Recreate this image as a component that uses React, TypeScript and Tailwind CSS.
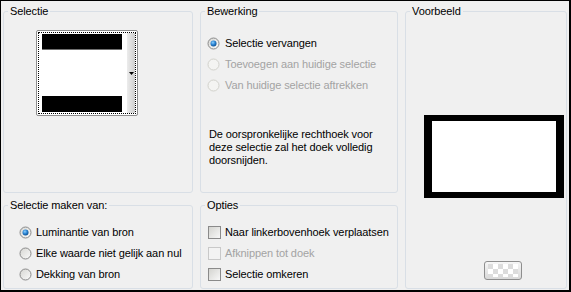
import { ReactNode } from "react"

type GroupBoxProps = {
    title: string
    className?: string
    children?: ReactNode
}

const GroupBox = ({ title, className = "", children }: GroupBoxProps) => (
    <fieldset className={`min-w-0 border border-[#d9dfe6] rounded-[3px] ${className}`}>
        <legend className="ml-[4px] px-[2px] leading-[13px]">{title}</legend>
        {children}
    </fieldset>
)

const Radio = ({ checked = false, disabled = false }: { checked?: boolean, disabled?: boolean }) => (
    <svg width="13" height="13" viewBox="0 0 13 13" className="shrink-0">
        <defs>
            <linearGradient id="radioFill" x1="0" y1="0" x2="1" y2="1">
                <stop offset="0" stopColor="#d6d6d2" />
                <stop offset="1" stopColor="#fbfbfb" />
            </linearGradient>
            <radialGradient id="radioDot" cx="0.4" cy="0.35" r="0.7">
                <stop offset="0" stopColor="#8fd0ff" />
                <stop offset="0.5" stopColor="#2d86d4" />
                <stop offset="1" stopColor="#0b4a8b" />
            </radialGradient>
        </defs>
        <circle cx="6.5" cy="6.5" r="5.5" fill={disabled ? "#f4f4f2" : "url(#radioFill)"} stroke={disabled ? "#d2d2cc" : "#8a8a8a"} />
        {checked && <circle cx="6.5" cy="6.5" r="3" fill="url(#radioDot)" />}
    </svg>
)

const Check = ({ disabled = false }: { disabled?: boolean }) => (
    <div className={`w-[13px] h-[13px] shrink-0 border ${disabled ? 'border-[#c9c9c9] bg-[#f3f3f3]' : 'border-[#8a8a8a] bg-gradient-to-br from-[#d4d4d0] to-[#f8f8f8]'}`} />
)

const Row = ({ children, disabled = false, gap = "gap-[5px]" }: { children: ReactNode, disabled?: boolean, gap?: string }) => (
    <div className={`h-[21px] flex items-center ${gap} ${disabled ? 'text-[#a3a3a3]' : ''}`}>{children}</div>
)

const App = () => {
    return (
        <div className="w-[571px] h-[292px] border-t border-l border-r-2 border-b-2 border-black bg-[#f0f0f0] pt-[4px] pl-[2px] font-['Liberation_Sans',Arial,sans-serif] text-[11px] leading-[13px] tracking-[-0.1px] text-black">
            <div className="grid grid-cols-[190px_198px_162px] grid-rows-[188px_90px] gap-x-[7px] gap-y-[6px]">

                <GroupBox title="Selectie">
                    <div className="ml-[32px] mt-[12px] w-[102px] h-[86px] border border-[#8c8c8c] rounded-[2px] bg-white p-[1px]">
                        <div className="h-full border border-dotted border-black flex">
                            <div className="flex-1 flex flex-col justify-between pl-[3px] pr-[5px] py-[1px]">
                                <div className="h-[16px] bg-black border-b border-[#6f6f6f]" />
                                <div className="h-[16px] bg-black" />
                            </div>
                            <div className="w-[8px] bg-gradient-to-r from-[#ececec] to-[#cfcfcf] flex items-center justify-center">
                                <svg width="5" height="3" viewBox="0 0 5 3"><path d="M0 0H5L2.5 3Z" fill="#000" /></svg>
                            </div>
                        </div>
                    </div>
                </GroupBox>

                <GroupBox title="Bewerking">
                    <div className="mt-[15px] pl-[6px]">
                        <Row><Radio checked />Selectie vervangen</Row>
                        <Row disabled><Radio disabled />Toevoegen aan huidige selectie</Row>
                        <Row disabled><Radio disabled />Van huidige selectie aftrekken</Row>
                    </div>
                    <p className="mt-[32px] pl-[8px]">
                        De oorspronkelijke rechthoek voor<br />
                        deze selectie zal het doek volledig<br />
                        doorsnijden.
                    </p>
                </GroupBox>

                <GroupBox title="Voorbeeld" className="row-span-2">
                    <div className="ml-[18px] mt-[97px] w-[140px] h-[83px] bg-white border-x-[8px] border-y-[6px] border-black" />
                    <div className="ml-[78px] mt-[63px] w-[38px] h-[19px] rounded-[3px] border border-[#8e8e8e] bg-gradient-to-b from-[#f6f6f6] to-[#d9d9d9] flex items-center justify-center">
                        <svg width="30" height="13" viewBox="0 0 30 13">
                            <rect x="0" y="0" width="30" height="13" fill="#dcdcdc" />
                            <rect x="5" y="0" width="5" height="5" fill="#fff" />
                            <rect x="15" y="0" width="5" height="5" fill="#fff" />
                            <rect x="25" y="0" width="5" height="5" fill="#fff" />
                            <rect x="0" y="5" width="5" height="5" fill="#fff" />
                            <rect x="10" y="5" width="5" height="5" fill="#fff" />
                            <rect x="20" y="5" width="5" height="5" fill="#fff" />
                            <rect x="5" y="10" width="5" height="3" fill="#fff" />
                            <rect x="15" y="10" width="5" height="3" fill="#fff" />
                            <rect x="25" y="10" width="5" height="3" fill="#fff" />
                        </svg>
                    </div>
                </GroupBox>

                <GroupBox title="Selectie maken van:">
                    <div className="mt-[10px] pl-[15px]">
                        <Row gap="gap-[4px]"><Radio checked />Luminantie van bron</Row>
                        <Row gap="gap-[4px]"><Radio />Elke waarde niet gelijk aan nul</Row>
                        <Row gap="gap-[4px]"><Radio />Dekking van bron</Row>
                    </div>
                </GroupBox>

                <GroupBox title="Opties">
                    <div className="mt-[10px] pl-[7px]">
                        <Row gap="gap-[4px]"><Check />Naar linkerbovenhoek verplaatsen</Row>
                        <Row gap="gap-[4px]" disabled><Check disabled />Afknippen tot doek</Row>
                        <Row gap="gap-[4px]"><Check />Selectie omkeren</Row>
                    </div>
                </GroupBox>

            </div>
        </div>
    )
}

export default App
